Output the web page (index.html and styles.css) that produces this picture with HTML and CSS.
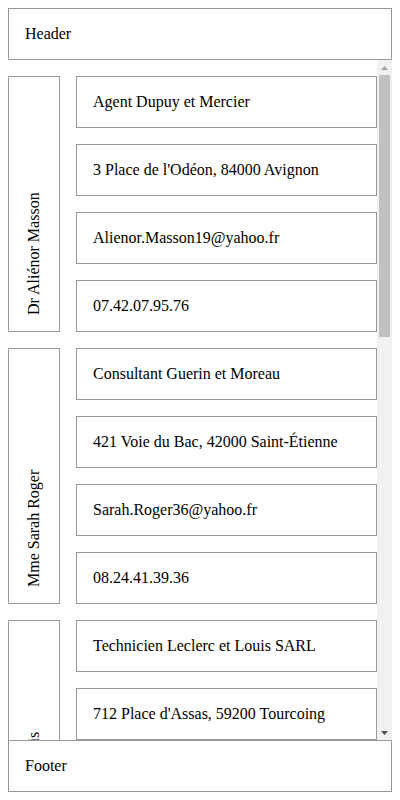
FILE: index.html
```html
<!DOCTYPE html>
<html lang="fr">
<head>
<meta charset="utf-8">
<title>Contacts</title>
<link rel="stylesheet" href="styles.css">
</head>
<body>
<div class="page">
  <header class="box">Header</header>
  <div class="viewport">
    <main class="list">
      <section class="row">
        <div class="name"><span>Dr Aliénor Masson</span></div>
        <div class="fields">
          <div class="box">Agent Dupuy et Mercier</div>
          <div class="box">3 Place de l'Odéon, 84000 Avignon</div>
          <div class="box">Alienor.Masson19@yahoo.fr</div>
          <div class="box">07.42.07.95.76</div>
        </div>
      </section>
      <section class="row">
        <div class="name"><span>Mme Sarah Roger</span></div>
        <div class="fields">
          <div class="box">Consultant Guerin et Moreau</div>
          <div class="box">421 Voie du Bac, 42000 Saint-Étienne</div>
          <div class="box">Sarah.Roger36@yahoo.fr</div>
          <div class="box">08.24.41.39.36</div>
        </div>
      </section>
      <section class="row">
        <div class="name"><span>M. Théophile Louis</span></div>
        <div class="fields">
          <div class="box">Technicien Leclerc et Louis SARL</div>
          <div class="box">712 Place d'Assas, 59200 Tourcoing</div>
          <div class="box">Theophile.Louis52@gmail.com</div>
          <div class="box">03.65.18.72.04</div>
        </div>
      </section>
      <section class="row">
        <div class="name"><span>Mlle Camille Fabre</span></div>
        <div class="fields">
          <div class="box">Gérant Petit et Fils</div>
          <div class="box">58 Rue de la Paix, 75002 Paris</div>
          <div class="box">Camille.Fabre07@orange.fr</div>
          <div class="box">06.11.54.28.90</div>
        </div>
      </section>
      <section class="row">
        <div class="name"><span>M. Julien Bertrand</span></div>
        <div class="fields">
          <div class="box">Ingénieur Blanc SA</div>
          <div class="box">9 Quai Saint-Antoine, 69002 Lyon</div>
          <div class="box">Julien.Bertrand44@free.fr</div>
          <div class="box">04.78.36.21.55</div>
        </div>
      </section>
      <section class="row">
        <div class="name"><span>Mme Léa Garnier</span></div>
        <div class="fields">
          <div class="box">Directrice Lambert et Roux</div>
          <div class="box">27 Allée des Pins, 33000 Bordeaux</div>
          <div class="box">Lea.Garnier81@hotmail.fr</div>
          <div class="box">05.56.92.14.73</div>
        </div>
      </section>
    </main>
    <div class="scrollbar" aria-hidden="true">
      <div class="sb-btn">
        <svg width="7" height="4" viewBox="0 0 7 4"><polygon points="3.5,0 7,4 0,4" fill="#a3a3a3"/></svg>
      </div>
      <div class="sb-track"><div class="sb-thumb"></div></div>
      <div class="sb-btn">
        <svg width="7" height="4" viewBox="0 0 7 4"><polygon points="0,0 7,0 3.5,4" fill="#505050"/></svg>
      </div>
    </div>
  </div>
  <footer class="box">Footer</footer>
</div>
</body>
</html>
```

FILE: styles.css
```css
html, body {
  height: 100%;
}
body {
  margin: 8px;
  height: calc(100% - 16px);
  font-family: "Liberation Serif", "Times New Roman", serif;
  font-size: 16px;
  color: #000;
  background: #fff;
}
.page {
  height: 100%;
  display: flex;
  flex-direction: column;
}
.box {
  border: 1px solid #999;
  padding: 16px;
  line-height: 18px;
  white-space: nowrap;
  overflow: hidden;
}
header.box, footer.box {
  flex: none;
}
.viewport {
  flex: 1;
  min-height: 0;
  position: relative;
}
.list {
  height: 100%;
  box-sizing: border-box;
  overflow: hidden;
  padding: 16px 15px 32px 0;
  display: flex;
  flex-direction: column;
  gap: 16px;
}
.scrollbar {
  position: absolute;
  top: 0;
  right: 0;
  bottom: 0;
  width: 15px;
  background: #f1f1f1;
  display: flex;
  flex-direction: column;
}
.sb-btn {
  height: 15px;
  flex: none;
  display: flex;
  align-items: center;
  justify-content: center;
}
.sb-btn svg {
  display: block;
}
.sb-track {
  flex: 1;
}
.sb-thumb {
  height: 262px;
  margin: 0 2px;
  background: #c1c1c1;
}
.row {
  display: flex;
  gap: 16px;
  flex: none;
}
.name {
  border: 1px solid #999;
  padding: 16px;
  line-height: 18px;
  writing-mode: vertical-rl;
  transform: rotate(180deg);
  white-space: nowrap;
  flex: none;
}
.fields {
  flex: 1;
  min-width: 0;
  display: flex;
  flex-direction: column;
  gap: 16px;
}
```
